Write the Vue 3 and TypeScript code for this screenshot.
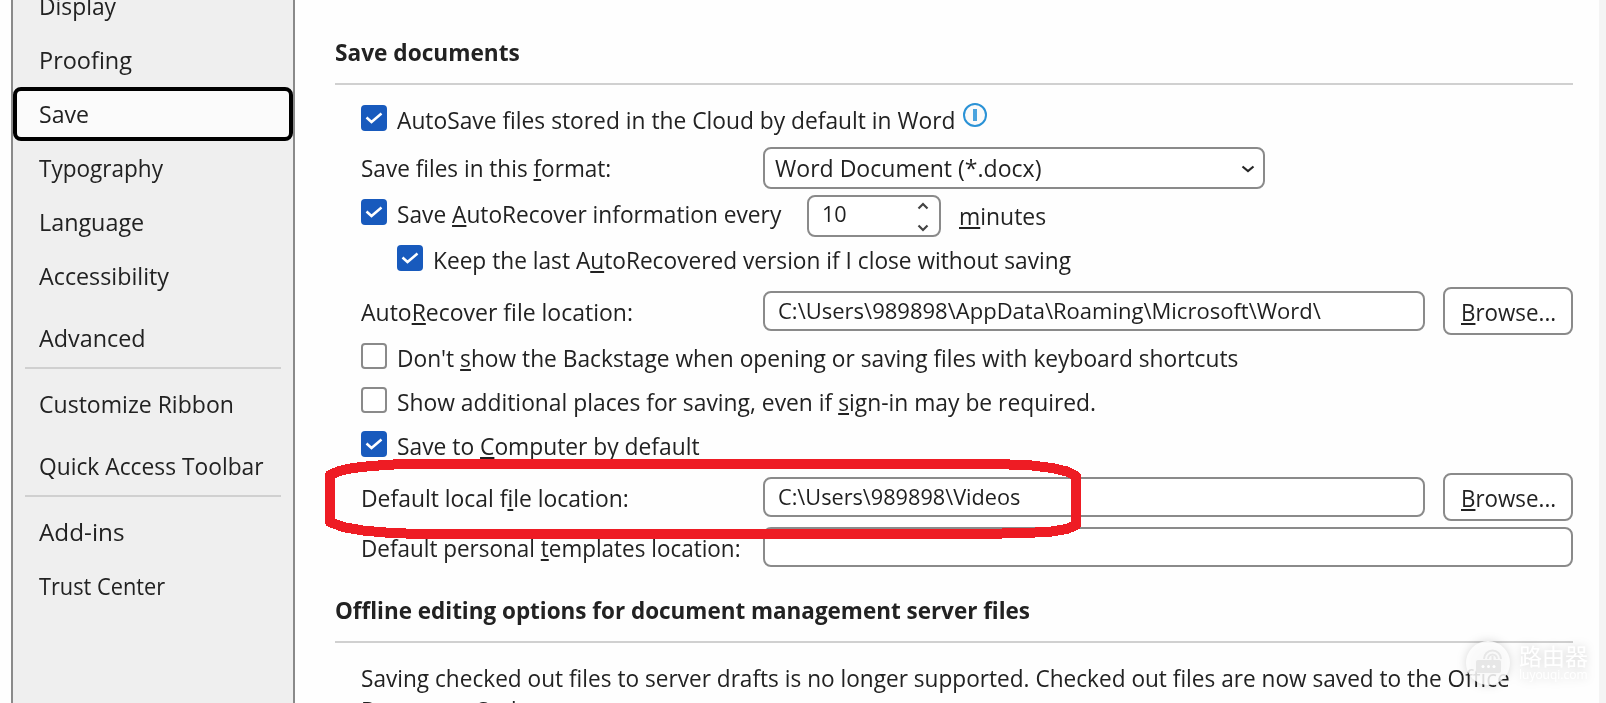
<template>
  <div class="options-dialog">
    <nav class="sidebar">
      <template v-for="item in navItems" :key="item.label">
        <div
          class="nav-item"
          :class="{ selected: item.label === activeTab, spaced: item.spaced }"
          @click="activeTab = item.label"
        >
          <span v-fit="item.width" class="text">{{ item.label }}</span>
        </div>
        <div v-if="item.divider" class="nav-divider"></div>
      </template>
    </nav>

    <main class="content">
      <h2 class="section-title"><span v-fit="185" class="text">Save documents</span></h2>

      <div class="section-body">
        <div class="row check-row">
          <span class="checkbox checked"><svg viewBox="0 0 26 26"><path :d="checkPath" /></svg></span>
          <span class="check-label cloud-label"><span v-fit="558" class="text">AutoSave files stored in the Cloud by default in Word</span></span>
          <svg class="info-icon" viewBox="0 0 24 24">
            <circle cx="12" cy="12" r="11" />
            <path d="M12 6v12" />
          </svg>
        </div>

        <div class="row format-row">
          <span class="field-label"><span v-fit="250" class="text">Save files in this <u>f</u>ormat:</span></span>
          <div class="select">
            <span v-fit="266" class="text">Word Document (*.docx)</span>
            <svg class="select-arrow" viewBox="0 0 14 8"><path d="M1.500 1.500 7 6l5.500-4.500" /></svg>
          </div>
        </div>

        <div class="row recover-row">
          <span class="checkbox checked"><svg viewBox="0 0 26 26"><path :d="checkPath" /></svg></span>
          <span class="check-label"><span v-fit="384" class="text">Save <u>A</u>utoRecover information every</span></span>
          <div class="spinner">
            <span v-fit="25" class="text value">{{ minutes }}</span>
            <span class="spinner-buttons">
              <svg viewBox="0 0 12 8" @click="minutes++"><path d="M1.500 6.500 6 2l4.500 4.500" /></svg>
              <svg viewBox="0 0 12 8" @click="minutes--"><path d="M1.500 1.500 6 6l4.500-4.500" /></svg>
            </span>
          </div>
          <span class="unit"><span v-fit="87" class="text"><u>m</u>inutes</span></span>
        </div>

        <div class="row check-row nested">
          <span class="checkbox checked"><svg viewBox="0 0 26 26"><path :d="checkPath" /></svg></span>
          <span class="check-label"><span v-fit="638" class="text">Keep the last A<u>u</u>toRecovered version if I close without saving</span></span>
        </div>

        <div class="row path-row">
          <span class="field-label"><span v-fit="272" class="text">Auto<u>R</u>ecover file location:</span></span>
          <div class="text-input"><span v-fit="543" class="text value">C:\Users\989898\AppData\Roaming\Microsoft\Word\</span></div>
          <button class="browse"><span v-fit="95" class="text"><u>B</u>rowse...</span></button>
        </div>

        <div class="row check-row">
          <span class="checkbox"></span>
          <span class="check-label"><span v-fit="841" class="text">Don't <u>s</u>how the Backstage when opening or saving files with keyboard shortcuts</span></span>
        </div>

        <div class="row check-row">
          <span class="checkbox"></span>
          <span class="check-label"><span v-fit="699" class="text">Show additional places for saving, even if <u>s</u>ign-in may be required.</span></span>
        </div>

        <div class="row check-row">
          <span class="checkbox checked"><svg viewBox="0 0 26 26"><path :d="checkPath" /></svg></span>
          <span class="check-label"><span v-fit="303" class="text">Save to <u>C</u>omputer by default</span></span>
        </div>

        <div class="row path-row">
          <span class="field-label"><span v-fit="268" class="text">Default local f<u>i</u>le location:</span></span>
          <div class="text-input"><span v-fit="242" class="text value">C:\Users\989898\Videos</span></div>
          <button class="browse"><span v-fit="95" class="text"><u>B</u>rowse...</span></button>
        </div>

        <div class="row template-row">
          <span class="field-label"><span v-fit="380" class="text">Default personal <u>t</u>emplates location:</span></span>
          <div class="text-input wide"></div>
        </div>
      </div>

      <h2 class="section-title offline"><span v-fit="695" class="text">Offline editing options for document management server files</span></h2>

      <p class="note">
        <span v-fit="1149" class="text">Saving checked out files to server drafts is no longer supported. Checked out files are now saved to the Office</span>
        <span v-fit="182" class="text">Document Cache.</span>
      </p>
    </main>

    <div class="scroll-gutter"></div>

    <!-- hand-drawn marker around the default file location -->
    <svg class="marker" viewBox="0 0 776 100">
      <path d="M10 20 19 16 33 13 51 11 81 9H678L712 10.500 732 13 747 16.500 756 21V70L747 74 728 77 702 78 663 79H101L71 78 43 75.500 23 72 10 67Z" />
    </svg>

    <div class="watermark">
      <svg class="watermark-logo" viewBox="0 0 44 44">
        <circle cx="22" cy="22" r="22" fill="#fff" fill-opacity="0.85" />
        <rect x="10" y="19" width="25" height="13" rx="2" fill="#e7e7e7" />
        <g fill="none" stroke="#e7e7e7" stroke-width="2">
          <path d="M18 18a8.500 8.500 0 1 1 17 0" />
          <path d="M22 18a4.500 4.500 0 1 1 9 0" />
        </g>
        <path d="M26.500 15v6" stroke="#e7e7e7" stroke-width="2" />
        <g fill="#fff">
          <circle cx="17" cy="25.500" r="1.500" />
          <circle cx="22.500" cy="25.500" r="1.500" />
          <circle cx="28" cy="25.500" r="1.500" />
        </g>
      </svg>
      <div class="watermark-text">
        <span class="watermark-name">路由器</span>
        <span v-fit="69" class="watermark-url">luyouqi.com</span>
      </div>
    </div>
  </div>
</template>

<script setup lang="ts">
import { ref } from 'vue';

interface NavItem {
  label: string;
  width: number;
  spaced?: boolean;
  divider?: boolean;
}

const navItems: NavItem[] = [
  { label: 'Display', width: 77 },
  { label: 'Proofing', width: 93 },
  { label: 'Save', width: 50 },
  { label: 'Typography', width: 124 },
  { label: 'Language', width: 105 },
  { label: 'Accessibility', width: 130 },
  { label: 'Advanced', width: 107, spaced: true, divider: true },
  { label: 'Customize Ribbon', width: 195, spaced: true },
  { label: 'Quick Access Toolbar', width: 225, spaced: true, divider: true },
  { label: 'Add-ins', width: 85, spaced: true },
  { label: 'Trust Center', width: 126 }
];

const activeTab = ref('Save');
const minutes = ref(10);

const checkPath = 'M5.500 12.500 10.500 17 20.500 8.500';

// Condenses a label horizontally so that it takes up the given width
const vFit = {
  mounted(el: HTMLElement, binding: { value: number }) {
    el.style.transform = `scaleX(${binding.value / el.offsetWidth})`;
  }
};
</script>

<style>
body {
  margin: 0;
  background: #fff;
}
</style>

<style scoped>
.options-dialog {
  position: relative;
  display: flex;
  box-sizing: border-box;
  width: 1606px;
  height: 703px;
  padding-left: 11px;
  overflow: hidden;
  background: #fefefe;
  color: #222;
  font-family: 'Open Sans', 'Noto Sans', sans-serif;
  font-size: 24px;
  font-variant-ligatures: none;
  line-height: 32px;
}

.text {
  display: inline-block;
  white-space: nowrap;
  transform-origin: 0 0;
}

u {
  text-decoration-thickness: 2px;
  text-underline-offset: 2px;
  text-decoration-skip-ink: none;
}

.sidebar {
  flex: none;
  box-sizing: border-box;
  width: 284px;
  height: 724px;
  margin-top: -21px;
  border: solid #8a8a8a;
  border-width: 0 2px;
  background: #efefef;
}

.nav-item {
  box-sizing: border-box;
  height: 54px;
  padding: 11px 0 0 26px;
  cursor: pointer;
}

.nav-item.spaced {
  margin-top: 8px;
}

.nav-item.selected {
  padding: 7px 0 0 22px;
  border: 4px solid #000;
  border-radius: 8px;
  background: #fbfbfb;
}

.nav-divider {
  height: 2px;
  margin: 2px 12px 0;
  background: #d0d0d0;
}

.content {
  flex: none;
  box-sizing: border-box;
  width: 1304px;
  padding: 36px 26px 0 40px;
}

.section-title {
  box-sizing: border-box;
  height: 49px;
  margin: 0;
  border-bottom: 2px solid #d0d0d0;
  font-size: 24px;
  font-weight: 700;
}

.section-title.offline {
  margin-top: 27px;
}

.section-body {
  padding: 18px 0 0 26px;
}

.row {
  display: flex;
  align-items: flex-start;
}

.check-row {
  height: 42px;
  padding-top: 2px;
}

.nested {
  padding-left: 36px;
}

.checkbox {
  flex: none;
  box-sizing: border-box;
  width: 26px;
  height: 26px;
  margin-right: 10px;
  border: 2px solid #8a8a8a;
  border-radius: 4px;
  background: #fff;
}

.checkbox.checked {
  border: 0;
  background: #185abd;
}

.checkbox svg {
  display: block;
  width: 26px;
  height: 26px;
  fill: none;
  stroke: #fff;
  stroke-width: 2.5;
}

.check-label {
  flex: none;
  margin-top: -1px;
}

.cloud-label {
  width: 566px;
}

.info-icon {
  flex: none;
  width: 24px;
  height: 24px;
  margin-top: -2px;
  fill: #fafafa;
  stroke: #2a92d6;
  stroke-width: 2;
}

.info-icon path {
  stroke: #4aa3de;
  stroke-width: 4;
}

.field-label {
  flex: none;
  width: 402px;
  padding-top: 5px;
}

.format-row {
  height: 48px;
}

.select,
.spinner,
.text-input,
.browse {
  flex: none;
  box-sizing: border-box;
  border: 2px solid #8a8a8a;
  border-radius: 8px;
  background: #fff;
}

.select {
  display: flex;
  justify-content: space-between;
  align-items: flex-start;
  width: 502px;
  height: 42px;
  padding: 3px 8px 0 10px;
}

.select-arrow {
  width: 14px;
  height: 8px;
  margin-top: 13px;
  fill: none;
  stroke: #262626;
  stroke-width: 2.2;
}

.recover-row {
  height: 48px;
}

.recover-row .checkbox {
  margin-top: 4px;
}

.recover-row .check-label {
  width: 410px;
  margin-top: 3px;
}

.spinner {
  display: flex;
  justify-content: space-between;
  align-items: flex-start;
  width: 134px;
  height: 42px;
  padding: 1px 10px 0 13px;
}

.value {
  font-size: 22.5px;
  color: #1f1f1f;
}

.spinner-buttons {
  display: flex;
  flex-direction: column;
  gap: 14px;
  padding-top: 4px;
}

.spinner-buttons svg {
  display: block;
  width: 12px;
  height: 8px;
  fill: none;
  stroke: #444;
  stroke-width: 2.2;
}

.unit {
  margin: 5px 0 0 18px;
}

.path-row {
  height: 54px;
}

.path-row .field-label {
  padding-top: 9px;
}

.text-input {
  width: 662px;
  height: 40px;
  margin-top: 4px;
  padding: 1px 0 0 13px;
}

.text-input.wide {
  width: 810px;
  margin-top: 0;
}

.template-row {
  height: 40px;
}

.browse {
  width: 130px;
  height: 48px;
  margin-left: 18px;
  padding: 2px 0 0 16px;
  color: inherit;
  font: inherit;
  text-align: left;
}

.note {
  display: flex;
  flex-direction: column;
  align-items: flex-start;
  margin: 19px 0 0;
  padding-left: 26px;
}

.scroll-gutter {
  flex: none;
  width: 7px;
  background: #f4f4f4;
}

.marker {
  position: absolute;
  top: 455px;
  left: 320px;
  width: 776px;
  height: 100px;
  fill: none;
  stroke: #ee1c24;
  stroke-width: 10;
  stroke-linejoin: round;
  shape-rendering: crispEdges;
}

.watermark {
  position: absolute;
  top: 641px;
  left: 1466px;
  display: flex;
  gap: 9px;
  filter: drop-shadow(0 0 5px rgba(0, 0, 0, 0.18));
}

.watermark-logo {
  width: 44px;
  height: 44px;
}

.watermark-text {
  display: flex;
  flex-direction: column;
  align-items: flex-start;
  color: #fff;
}

.watermark-name {
  font-family: 'Noto Sans CJK SC', sans-serif;
  font-size: 23px;
  line-height: 28px;
}

.watermark-url {
  font-size: 12px;
  line-height: 12px;
  transform-origin: 0 0;
}
</style>
